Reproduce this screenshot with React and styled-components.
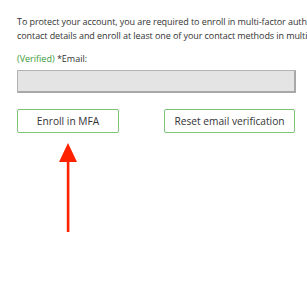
import styled, { createGlobalStyle } from "styled-components";

const Global = createGlobalStyle`
  body {
    margin: 0;
    background: #fff;
    font-family: "Open Sans", "Liberation Sans", sans-serif;
    overflow: hidden;
  }
`;

export default function App() {
  return (
    <>
      <Global />
      <Page>
        <Intro>
          To protect your account, you are required to enroll in multi-factor authentication. Please verify your
          contact details and enroll at least one of your contact methods in multi-factor authentication.
        </Intro>
        <Label>
          <Verified>(Verified)</Verified> *Email:
        </Label>
        <EmailInput type="text" disabled />
        <Botoes>
          <Botao $largura={102}>Enroll in MFA</Botao>
          <Botao $largura={131}>Reset email verification</Botao>
        </Botoes>
        <Seta width="20" height="92" viewBox="0 0 20 92">
          <polygon points="10,1 19,20 1,20" fill="#ff2200" />
          <rect x="8.8" y="18" width="2.6" height="72" fill="#ff2200" />
        </Seta>
      </Page>
    </>
  );
}

const Page = styled.div`
  width: 307px;
  height: 296px;
  padding: 15px 0 0 17px;
  box-sizing: border-box;
  overflow: hidden;
`;

const Intro = styled.p`
  margin: 0;
  width: 440px;
  font-size: 9px;
  line-height: 13.5px;
  letter-spacing: -0.08px;
  color: #333;
`;

const Label = styled.div`
  margin-top: 11px;
  font-size: 9px;
  line-height: 12px;
  color: #333;
`;

const Verified = styled.span`
  color: #3a9a3a;
`;

const EmailInput = styled.input`
  display: block;
  box-sizing: border-box;
  width: 279px;
  height: 23px;
  margin-top: 5px;
  background: #e4e4e4;
  border: 1px solid #b3b3b3;
  border-right: 2px solid #a8a8a8;
  border-bottom: 2px solid #a8a8a8;
  border-radius: 1px;
  padding: 0;
`;

const Botoes = styled.div`
  display: flex;
  justify-content: space-between;
  width: 278px;
  margin-top: 16px;
`;

const Botao = styled.button`
  box-sizing: border-box;
  width: ${(p) => p.$largura}px;
  height: 24px;
  background: #fff;
  border: 1px solid #7cc576;
  border-radius: 2px;
  font-family: "Open Sans", "Liberation Sans", sans-serif;
  font-size: 10.2px;
  color: #333;
  padding: 0;
`;

const Seta = styled.svg`
  display: block;
  margin: 9px 0 0 41px;
`;
